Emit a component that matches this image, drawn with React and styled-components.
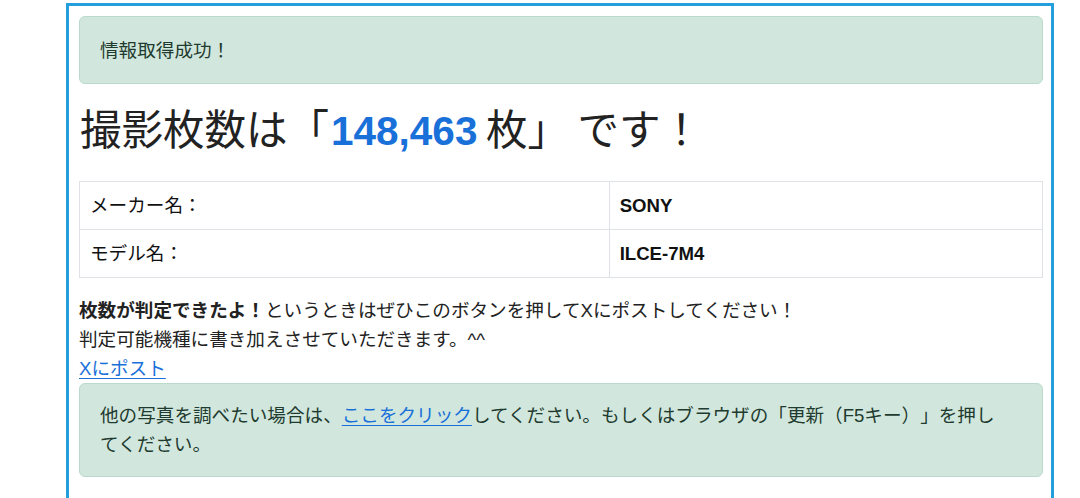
import React from "react"
import styled, { createGlobalStyle } from "styled-components"

const GlobalStyle = createGlobalStyle`
  body {
    margin: 0;
    background: #fff;
    font-family: "Liberation Sans", "Noto Sans CJK JP", sans-serif;
    color: #212529;
    text-spacing-trim: space-all;
  }
`

const Frame = styled.main`
  box-sizing: border-box;
  width: 988px;
  margin: 3px 0 0 66px;
  padding: 10px 8px 40px 10px;
  border: 3px solid #239fdb;
  border-bottom: none;
  font-size: 18.6px;
  line-height: 29px;
`

const Alert = styled.div`
  background: #d1e7dd;
  border: 1px solid #badbcc;
  border-radius: 6px;
  color: #1f3b2f;
  padding: ${(p) => (p.$wide ? "17px 40px 17px 20px" : "19px 20px 18px 20px")};
`

const Heading = styled.h1`
  margin: 23px 0 26px 1px;
  font-size: 41.5px;
  font-weight: 400;
  line-height: 48px;
  word-spacing: -3px;
  color: #222;
`

const Count = styled.strong`
  color: #1a70d9;
  font-weight: 700;
  font-size: 40.5px;
  margin-left: 2px;
`

const Table = styled.table`
  width: 100%;
  border-collapse: collapse;
  margin-bottom: 18px;
`

const Cell = styled.td`
  border: 1px solid #dee2e6;
  padding: 9px 10px;
  color: #111;
  font-weight: ${(p) => (p.$bold ? 700 : 400)};
  width: ${(p) => (p.$bold ? "45%" : "55%")};
`

const Note = styled.p`
  margin: 0;
  color: #222;
`

const Link = styled.a`
  color: #1a70d9;
  text-decoration: underline;
  text-underline-offset: 3px;
`

const specs = [
  { label: "メーカー名：", value: "SONY" },
  { label: "モデル名：", value: "ILCE-7M4" },
]

export default function App() {
  return (
    <>
      <GlobalStyle />
      <Frame lang="ja">
        <Alert>情報取得成功！</Alert>
        <Heading>
          撮影枚数は「<Count>148,463</Count> 枚」 です！
        </Heading>
        <Table>
          <tbody>
            {specs.map((s) => (
              <tr key={s.label}>
                <Cell>{s.label}</Cell>
                <Cell $bold>{s.value}</Cell>
              </tr>
            ))}
          </tbody>
        </Table>
        <Note>
          <strong>枚数が判定できたよ！</strong>というときはぜひこのボタンを押してXにポストしてください！
          <br />
          判定可能機種に書き加えさせていただきます。^^
          <br />
          <Link href="#">Xにポスト</Link>
        </Note>
        <Alert $wide>
          他の写真を調べたい場合は、<Link href="#">ここをクリック</Link>してください。もしくはブラウザの「更新（F5キー）」を押してください。
        </Alert>
      </Frame>
    </>
  )
}
